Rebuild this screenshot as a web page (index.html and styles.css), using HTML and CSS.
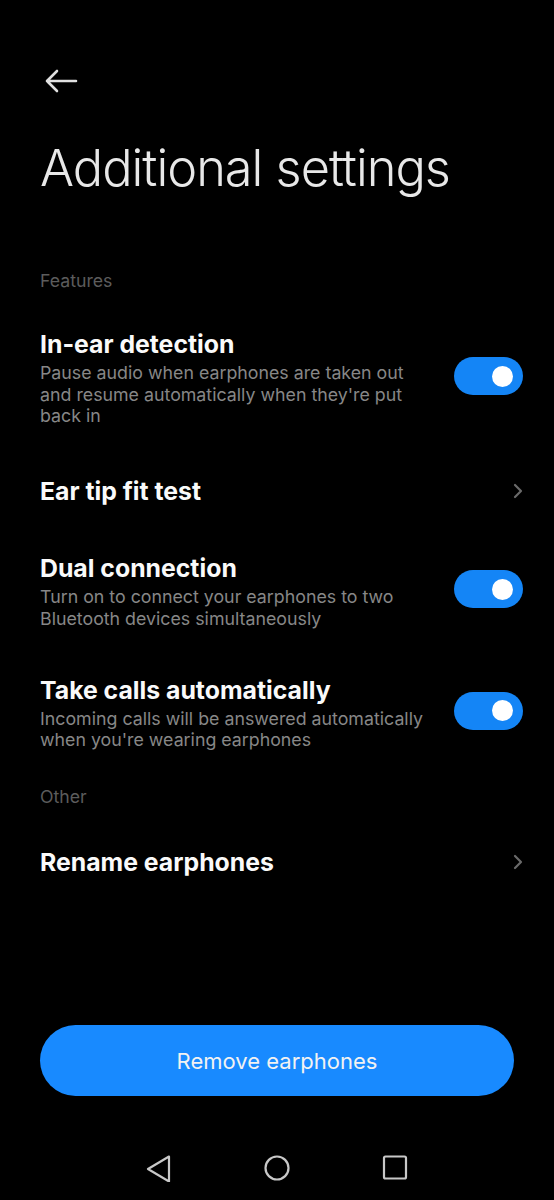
FILE: index.html
```html
<!DOCTYPE html>
<html>
<head>
<meta charset="utf-8">
<link rel="stylesheet" href="styles.css">
</head>
<body>
<div class="screen">
  <div class="content">
    <div class="topbar">
      <svg class="back" width="34" height="24" viewBox="0 0 34 24">
        <path d="M32 12H3M13 2L3 12l10 10" fill="none" stroke="#e0e0e0" stroke-width="2.6" stroke-linecap="round" stroke-linejoin="round"/>
      </svg>
    </div>
    <h1 class="title">Additional settings</h1>

    <div class="section">Features</div>
    <div class="row">
      <div class="text">
        <div class="name">In-ear detection</div>
        <div class="desc">Pause audio when earphones are taken out and resume automatically when they're put back in</div>
      </div>
      <div class="toggle"><span class="knob"></span></div>
    </div>
    <div class="row single">
      <div class="text">
        <div class="name">Ear tip fit test</div>
      </div>
      <svg class="chev" width="10" height="16" viewBox="0 0 10 16"><path d="M2 2l6 6-6 6" fill="none" stroke="#6a6a6a" stroke-width="2.2" stroke-linecap="round" stroke-linejoin="round"/></svg>
    </div>
    <div class="row">
      <div class="text">
        <div class="name">Dual connection</div>
        <div class="desc">Turn on to connect your earphones to two Bluetooth devices simultaneously</div>
      </div>
      <div class="toggle"><span class="knob"></span></div>
    </div>
    <div class="row">
      <div class="text">
        <div class="name">Take calls automatically</div>
        <div class="desc">Incoming calls will be answered automatically when you're wearing earphones</div>
      </div>
      <div class="toggle"><span class="knob"></span></div>
    </div>

    <div class="section other">Other</div>
    <div class="row single">
      <div class="text">
        <div class="name">Rename earphones</div>
      </div>
      <svg class="chev" width="10" height="16" viewBox="0 0 10 16"><path d="M2 2l6 6-6 6" fill="none" stroke="#6a6a6a" stroke-width="2.2" stroke-linecap="round" stroke-linejoin="round"/></svg>
    </div>
  </div>

  <div class="bottom">
    <button class="remove">Remove earphones</button>
  </div>

  <div class="navbar">
    <svg width="28" height="28" viewBox="0 0 28 28"><path d="M24 2.5L3 15 24 27.5z" fill="none" stroke="#c8c8c8" stroke-width="2.2" stroke-linejoin="round"/></svg>
    <svg width="28" height="28" viewBox="0 0 28 28"><circle cx="14" cy="14" r="11.5" fill="none" stroke="#c8c8c8" stroke-width="2.2"/></svg>
    <svg width="28" height="28" viewBox="0 0 28 28"><rect x="3" y="2.5" width="22" height="22" rx="1.5" fill="none" stroke="#c8c8c8" stroke-width="2.2"/></svg>
  </div>
</div>
</body>
</html>
```

FILE: styles.css
```css
* { box-sizing: border-box; }
html, body { margin: 0; padding: 0; background: #000; }
body { font-family: Inter, "Noto Sans", sans-serif; color: #fff; }

.screen {
  width: 554px;
  height: 1200px;
  display: flex;
  flex-direction: column;
}

.content {
  padding: 0 31px 0 40px;
}

.topbar {
  height: 104px;
  padding-top: 69px;
  padding-left: 4px;
}
.back { display: block; }

.title {
  margin: 0;
  font-weight: 300;
  font-size: 50.5px;
  line-height: 62px;
  color: #e8e8e8;
  letter-spacing: -1px;
  height: 166px;
  padding-top: 33px;
}

.section {
  font-size: 17.7px;
  line-height: 22px;
  color: #5c5c5c;
  margin-bottom: 15px;
}
.section.other { margin-top: 12px; margin-bottom: 14px; }

.row {
  display: flex;
  align-items: center;
  justify-content: space-between;
  padding: 23px 0;
}
.row.single { min-height: 81px; padding: 0; }
.text { flex: 1; min-width: 0; padding-right: 24px; }
.name {
  font-size: 24.8px;
  font-weight: 700;
  line-height: 28px;
  color: #fafafa;
}
.desc {
  margin-top: 4px;
  font-size: 17.8px;
  line-height: 21.7px;
  color: #878787;
}

.toggle {
  flex: none;
  width: 69px;
  height: 38px;
  margin-top: -5px;
  border-radius: 19px;
  background: #1485f6;
  display: flex;
  align-items: center;
  justify-content: flex-end;
  padding-right: 10px;
}
.knob {
  width: 21px;
  height: 21px;
  border-radius: 50%;
  background: #fff;
}
.chev { flex: none; margin-right: 0; }

.bottom {
  margin-top: auto;
  padding: 0 40px 40px;
}
.remove {
  display: block;
  width: 100%;
  height: 71px;
  border: none;
  border-radius: 36px;
  background: #188aff;
  color: #f2f2f2;
  font-family: Inter, "Noto Sans", sans-serif;
  font-size: 22px;
  font-weight: 400;
}

.navbar {
  height: 64px;
  display: flex;
  align-items: center;
  justify-content: center;
  gap: 90px;
}
```
